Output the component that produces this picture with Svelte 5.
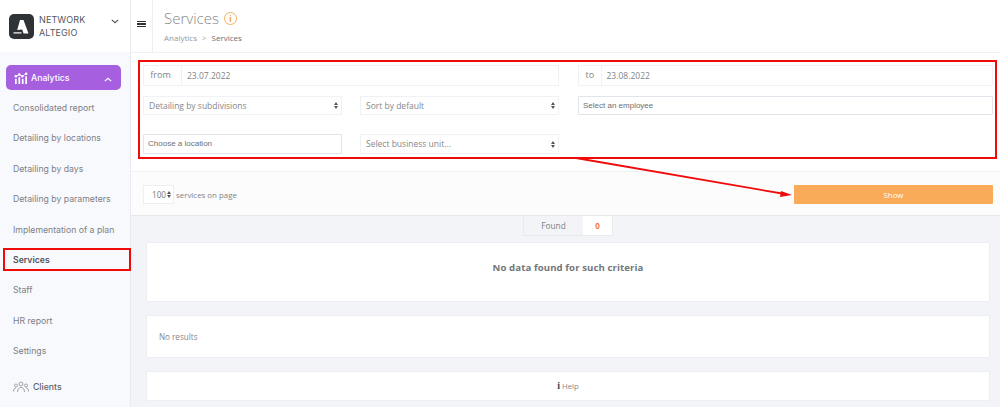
<script>
  const items = ['Consolidated report','Detailing by locations','Detailing by days','Detailing by parameters','Implementation of a plan','Services','Staff','HR report','Settings'];
</script>

<div class="page">
  <aside class="side">
    <div class="brand">
      <svg class="logo" viewBox="0 0 25 25" width="25" height="25"><rect width="25" height="25" rx="5" fill="#2f3336"/><path d="M11 6h3.500l5 13.500h-5l-1.300-4-5 .5z" fill="#fff"/><path d="M4.500 18.300h8v1.200h-8z" fill="#fff"/></svg>
      <div class="brand-name">NETWORK<br>ALTEGIO</div>
      <svg class="chev" viewBox="0 0 10 6" width="8" height="5"><path d="M1 1l4 3.500L9 1" fill="none" stroke="#555" stroke-width="1.500"/></svg>
    </div>
    <nav class="nav">
      <div class="active">
        <svg viewBox="0 0 16 14" width="14" height="12"><g stroke="#fff" fill="none" stroke-width="1"><path d="M2 5l4-2 3.500 2L14 2"/></g><g fill="#fff"><circle cx="2" cy="5" r="1.500"/><circle cx="6" cy="3" r="1.500"/><circle cx="9.500" cy="5" r="1.500"/><circle cx="14" cy="2" r="1.500"/><rect x="1" y="8" width="2" height="6"/><rect x="5" y="6" width="2" height="8"/><rect x="9" y="8" width="2" height="6"/><rect x="13" y="5" width="2" height="9"/></g></svg>
        <span>Analytics</span>
        <svg class="up" viewBox="0 0 10 6" width="8" height="5"><path d="M1 5l4-3.500L9 5" fill="none" stroke="#fff" stroke-width="1.500"/></svg>
      </div>
      <ul>
        {#each items as item}
          <li class:current={item === 'Services'}>{item}</li>
        {/each}
      </ul>
      <div class="clients">
        <svg viewBox="0 0 16 12" width="16" height="12" fill="none" stroke="#8b8f94" stroke-width=".8"><circle cx="8" cy="3" r="2"/><path d="M4.500 11c0-3 1.500-4.500 3.500-4.500s3.500 1.500 3.500 4.500"/><circle cx="3" cy="4.500" r="1.500"/><path d="M.5 10.500c0-2.500 1-3.500 2.500-3.500"/><circle cx="13" cy="4.500" r="1.500"/><path d="M15.500 10.500c0-2.500-1-3.500-2.500-3.500"/></svg>
        <span>Clients</span>
      </div>
    </nav>
  </aside>

  <main class="main">
    <header class="head">
      <div class="burger"><span></span><span></span><span></span></div>
      <div class="titles">
        <div class="title">Services <span class="info">i</span></div>
        <div class="crumbs"><span>Analytics</span><span class="sep">&gt;</span><b>Services</b></div>
      </div>
    </header>

    <section class="filters">
      <div class="row two">
        <div class="group"><span class="addon">from</span><span class="val">23.07.2022</span></div>
        <div class="group"><span class="addon to">to</span><span class="val">23.08.2022</span></div>
      </div>
      <div class="row two second">
        <div class="pair">
          <div class="sel">Detailing by subdivisions<i class="arrows"></i></div>
          <div class="sel">Sort by default<i class="arrows"></i></div>
        </div>
        <div class="txt">Select an employee</div>
      </div>
      <div class="row two third">
        <div class="pair">
          <div class="txt">Choose a location</div>
          <div class="sel tall">Select business unit...<i class="arrows"></i></div>
        </div>
      </div>
    </section>

    <section class="bar">
      <div class="count"><div class="num">100<i class="arrows"></i></div><span>services on page</span></div>
      <button class="show">Show</button>
    </section>

    <section class="results">
      <div class="found"><span class="f-label">Found</span><span class="f-num">0</span></div>
      <div class="card nodata">No data found for such criteria</div>
      <div class="card nores">No results</div>
      <div class="card help"><b>i</b> Help</div>
    </section>
  </main>

  <div class="mark box-filters"></div>
  <div class="mark box-nav"></div>
  <svg class="arrow" viewBox="0 0 1000 407" width="1000" height="407">
    <path d="M576 158L785 194" stroke="#f00b0b" stroke-width="1.800"/>
    <path d="M792 195l-11-4-1 6z" fill="#f00b0b"/>
  </svg>
</div>

<style>
  :global(body) { margin: 0; background: #f3f4f8; }
  .page { position: relative; width: 1000px; height: 407px; overflow: hidden; display: flex; font-family: "Open Sans", sans-serif; color: #7f8386; }
  .side { width: 130px; flex: none; background: #f8f9fd; border-right: 1px solid #e9ebf0; box-sizing: content-box; font-family: Inter, sans-serif; }
  .brand { height: 52px; background: #fff; display: flex; align-items: center; padding-left: 9px; }
  .logo { flex: none; margin-top: 1px; }
  .brand-name { font-size: 9px; line-height: 12.500px; color: #54585c; margin-left: 5px; margin-top: 1px; width: 68px; letter-spacing: .1px; }
  .chev { margin-top: -10px; margin-left: 4px; }
  .nav { padding-top: 13px; }
  .active { margin-left: 6px; width: 115px; height: 25px; box-sizing: border-box; border-radius: 5px; background: #a55fdf; color: #fff; display: flex; align-items: center; padding-left: 8px; font-size: 8.700px; font-weight: 500; gap: 3px; }
  .up { margin-left: auto; margin-right: 9px; margin-top: 3px; }
  ul { list-style: none; margin: 3px 0 0; padding: 0; }
  li { height: 30.400px; line-height: 30.400px; padding-left: 13px; font-size: 8.700px; color: #7c8085; white-space: nowrap; }
  li.current { color: #505458; font-weight: 600; }
  .clients { display: flex; align-items: center; gap: 4px; padding-left: 13px; margin-top: 5.500px; height: 30px; font-size: 8.700px; font-weight: 500; color: #5f6368; }
  .main { flex: 1; min-width: 0; display: flex; flex-direction: column; }
  .head { height: 53px; background: #fff; display: flex; box-sizing: border-box; border-bottom: 1px solid #eef0f4; }
  .burger { width: 21px; border-right: 1px solid #edeff3; display: flex; flex-direction: column; justify-content: center; align-items: center; gap: 1px; padding-bottom: 4px; box-sizing: content-box; }
  .burger span { width: 8.500px; height: 1.600px; background: #333; }
  .titles { padding-left: 11px; }
  .title { font-size: 15px; font-weight: 300; color: #85888b; line-height: 20px; margin-top: 8px; display: flex; align-items: center; gap: 5px; }
  .info { width: 11px; height: 11px; border: 1px solid #f3b255; border-radius: 50%; color: #f0a030; font-size: 8px; line-height: 11px; text-align: center; font-weight: 700; }
  .crumbs { font-size: 8px; margin-top: 4px; color: #94989b; display: flex; gap: 5px; }
  .crumbs .sep { color: #aaa; }
  .crumbs b { font-weight: 400; color: #6a6e72; }

  .filters { height: 119px; box-sizing: border-box; background: #fff; padding: 12px 7px 0 12px; border-bottom: 1px solid #f0f1f4; }
  .row.two { display: grid; grid-template-columns: 416px 415px; column-gap: 19px; }
  .second { margin-top: 10px; }
  .third { margin-top: 19px; }
  .pair { display: grid; grid-template-columns: 199px 199px; column-gap: 18px; }
  .group { display: flex; height: 21px; border: 1px solid #f0f1f3; box-sizing: border-box; font-size: 9px; }
  .addon { width: 38px; box-sizing: border-box; padding-right: 4px; text-align: center; border-right: 1px solid #f0f1f3; line-height: 18px; flex: none; color: #7f8386; }
  .addon.to { width: 22.500px; padding-right: 0; }
  .val { padding-left: 5px; line-height: 20px; font-size: 8.500px; color: #808386; }
  .sel { position: relative; height: 19px; box-sizing: border-box; border: 1px solid #f0f1f3; font-size: 8.500px; line-height: 17px; padding-left: 5px; color: #85888b; background: #fff; }
  .sel.tall { height: 20px; line-height: 18px; }
  .arrows { position: absolute; right: 3px; top: 50%; margin-top: -3.500px; width: 4px; height: 7px; }
  .arrows::before, .arrows::after { content: ""; position: absolute; left: 0; border-left: 2px solid transparent; border-right: 2px solid transparent; }
  .arrows::before { top: 0; border-bottom: 3px solid #555; }
  .arrows::after { bottom: 0; border-top: 3px solid #555; }
  .txt { height: 19px; box-sizing: border-box; border: 1px solid #dfe5ea; border-radius: 1px; font-size: 8px; line-height: 17px; padding-left: 4px; color: #6b6f72; font-family: "Liberation Sans", sans-serif; }
  .third .txt { height: 20px; line-height: 18px; }

  .bar { height: 44px; box-sizing: border-box; background: #fcfcfd; border-bottom: 1px solid #e6e8ed; display: flex; align-items: flex-start; justify-content: space-between; padding: 13px 7px 0 12px; }
  .count { display: flex; align-items: center; gap: 2px; font-size: 7.900px; height: 19px; color: #808386; }
  .num { position: relative; width: 31px; height: 19px; box-sizing: border-box; border: 1px solid #eeeff2; background: #fff; font-size: 8.200px; line-height: 18px; padding-left: 8px; color: #777; }
  .num .arrows { right: 2px; }
  .show { width: 199px; height: 19px; border: 0; padding: 0; background: #f9ab59; color: #fff; font: 400 7.800px "Open Sans", sans-serif; border-radius: 1px; }

  .results { flex: 1; padding: 0 10px 0 15px; display: flex; flex-direction: column; }
  .found { align-self: center; display: flex; height: 20px; box-sizing: border-box; border: 1px solid #e8eaee; border-top: 0; font-size: 8.300px; line-height: 19px; }
  .f-label { width: 59px; text-align: center; color: #7d8084; }
  .f-num { width: 29px; background: #fff; text-align: center; color: #f4794a; font-weight: 700; font-size: 8px; }
  .card { background: #fff; border: 1px solid #eceef2; box-sizing: border-box; }
  .nodata { height: 60px; margin-top: 6px; text-align: center; line-height: 50px; font-weight: 700; font-size: 9.600px; color: #72767a; letter-spacing: .1px; }
  .nores { height: 43px; margin-top: 13px; line-height: 41px; font-size: 8.100px; padding-left: 12px; color: #85888c; }
  .help { height: 30px; margin-top: 13px; text-align: center; line-height: 28px; font-size: 7.800px; color: #85888c; }
  .help b { color: #444; font: 700 10px "Liberation Serif", serif; }

  .mark { position: absolute; box-sizing: border-box; border: 2px solid #f00b0b; pointer-events: none; }
  .box-filters { left: 138px; top: 60px; width: 859px; height: 99px; }
  .box-nav { left: 3px; top: 248px; width: 128px; height: 23px; }
  .arrow { position: absolute; left: 0; top: 0; pointer-events: none; }
</style>
